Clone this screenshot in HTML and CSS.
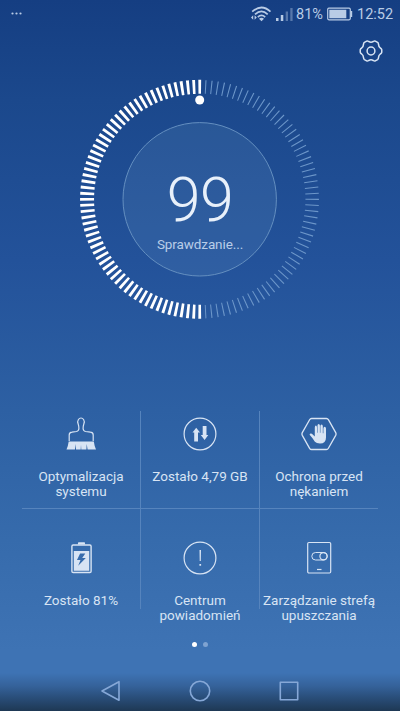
FILE: index.html
```html
<!DOCTYPE html>
<html lang="pl">
<head>
<meta charset="utf-8">
<title>Menedżer telefonu</title>
<link rel="stylesheet" href="styles.css">
</head>
<body>
<div class="screen">
  <header class="status">
    <svg class="dots" width="12" height="4" viewBox="0 0 12 4"><circle cx="2.500" cy="1.500" r="1.100"/><circle cx="6.500" cy="1.500" r="1.100"/><circle cx="10.500" cy="1.500" r="1.100"/></svg>
    <svg class="wifi" width="22" height="18" viewBox="0 0 22 18">
      <g fill="none" stroke="currentColor" stroke-width="1.700"><path d="M2.200 6.600Q11.500-1.600 20.500 6.600M5 9.300Q11.500 3.600 17.700 9.300M7.800 12.100Q11.500 8.800 15.200 12.100"/></g>
      <path d="M9 13.700Q11.500 11.800 14 13.700L11.500 16.300zM1 12.500L3.200 10.200V14.800zM6.800 12.500L4.600 10.200V14.800z"/>
    </svg>
    <svg class="signal" width="18" height="15" viewBox="0 0 18 15"><path d="M0 11h2.500v3H0zM4.800 8h2.500v6H4.800z"/><path opacity=".4" d="M9.700 4.500h2.300v9.500H9.700zM14.300 1h2.300v13h-2.300z"/></svg>
    <span class="percent">81%</span>
    <svg class="battery" width="26" height="14" viewBox="0 0 26 14"><rect x=".7" y="1.200" width="22.600" height="11.600" rx="1.200" fill="none" stroke="currentColor" stroke-width="1.200"/><path d="M2.300 2.800h17v8.400h-17zM23.500 4h1.700v6h-1.700z"/></svg>
    <span class="clock">12:52</span>
  </header>

  <div class="toolbar">
    <svg class="line" width="24" height="24" viewBox="-12 -12 24 24" stroke-width="1.500" stroke-linejoin="round">
      <path d="M10.700-1.500Q10.900 0 10.700 1.500Q10.500 2.300 9.300 3Q7.600 4.400 7.500 6.600Q7.500 8 6.600 8.600L4.300 9.900Q3.400 10.300 2.300 9.500Q0 8.200-2.300 9.500Q-3.400 10.300-4.300 9.900L-6.600 8.600Q-7.500 8-7.500 6.600Q-7.600 4.400-9.300 3Q-10.500 2.300-10.700 1.500Q-10.900 0-10.700-1.500Q-10.500-2.300-9.300-3Q-7.600-4.400-7.500-6.600Q-7.500-8-6.600-8.600L-4.300-9.900Q-3.400-10.300-2.300-9.500Q0-8.200 2.300-9.500Q3.400-10.300 4.300-9.900L6.600-8.600Q7.500-8 7.500-6.600Q7.600-4.400 9.300-3Q10.500-2.300 10.700-1.500Z"/>
      <circle r="3.900"/>
    </svg>
  </div>

  <main class="gauge">
    <svg class="ring" width="240" height="240" viewBox="-119.700 -120.300 240 240">
      <path class="ticks-on" pathLength="181.4" d="M1.370 112.490A112.500 112.500 0 1 1 1.370-112.490"/>
      <path class="ticks-off" pathLength="174.5" d="M5.400-112.370A112.500 112.500 0 0 1 5.400 112.370"/>
      <circle class="disc" r="76.700"/>
      <circle class="knob" cy="-99.300" r="4.500"/>
    </svg>
    <div class="reading">
      <div class="score">99</div>
      <div class="state">Sprawdzanie...</div>
    </div>
  </main>

  <section class="tiles">
    <div class="tile">
      <svg width="36" height="36" viewBox="0 0 36 36">
        <path fill="none" stroke="currentColor" stroke-width="1.200" d="M6.200 25V19Q6.200 16.500 9 16.200L13.500 15.500Q15.800 15 15.900 12.500Q16 10.500 15.300 8.500Q14 5.500 15.400 3.500Q16.500 2 18 2Q19.500 2 20.600 3.500Q22 5.500 20.700 8.500Q20 10.500 20.100 12.500Q20.200 15 22.500 15.500L27.500 16.200Q30.200 16.500 30.200 19V25"/>
        <path d="M5.700 25.500H30.800Q31.300 29.500 33 33.500H24.600L23.700 28L23.400 33.500H18.300L18 29L17.700 33.500H13L12.900 28L11.900 33.500H3.500Q5.200 29.500 5.700 25.500z"/>
      </svg>
      <p>Optymalizacja systemu</p>
    </div>
    <div class="tile">
      <svg width="36" height="36" viewBox="0 0 36 36"><circle cx="18" cy="18" r="15.900" fill="none" stroke="currentColor" stroke-width="1.200"/><path d="M14.200 11.800L18 16.500H16V25.500H12.200V16.500H10.500zM20.700 10H24.500V19H26.300L22.600 24L18.800 19H20.700z"/></svg>
      <p>Zostało 4,79 GB</p>
    </div>
    <div class="tile">
      <svg width="36" height="36" viewBox="0 0 36 36">
        <path fill="none" stroke="currentColor" stroke-width="1.300" d="M10.600 2.500H25.400Q26.700 2.500 27.400 3.700L34.700 16.600Q35.400 18 34.700 19.400L27.400 32.300Q26.700 33.500 25.400 33.500H10.600Q9.300 33.500 8.600 32.300L1.300 19.400Q.6 18 1.300 16.600L8.600 3.700Q9.300 2.500 10.600 2.500z"/>
        <path d="M9 17.700Q10.500 17 11.700 18.500L13.800 20.500V11.500Q13.900 9.500 14.900 9.500Q15.900 9.500 16 11.500V16.700H16.500V9.600Q16.600 8 17.700 8Q18.800 8 18.900 9.600V16.700H19.400V10Q19.500 8.500 20.600 8.500Q21.700 8.500 21.800 10V17.200H22.400V12.600Q22.500 10.800 23.600 10.800Q24.900 10.800 25 12.600V21.500Q25 27.600 19 27.600Q15.500 27.600 13.900 25.800Q12 22.500 9 19.300Q8.200 18.200 9 17.700z"/>
      </svg>
      <p>Ochrona przed nękaniem</p>
    </div>
    <div class="tile">
      <svg width="36" height="36" viewBox="0 0 36 36">
        <rect x="8.900" y="5" width="19.200" height="27.500" rx="1.300" fill="none" stroke="currentColor" stroke-width="1.400"/>
        <path d="M15.500 2.200H21.500Q22.100 2.200 22.100 4.500H14.900Q14.900 2.200 15.500 2.200z"/>
        <path fill-rule="evenodd" d="M10.800 11H26.200V30.700H10.800zM17.100 13.500L14 20H17.500L15.200 25.800L22.800 18H19.200L22.300 13.500z"/>
      </svg>
      <p>Zostało 81%</p>
    </div>
    <div class="tile">
      <svg width="36" height="36" viewBox="0 0 36 36"><circle cx="18" cy="18" r="15.900" fill="none" stroke="currentColor" stroke-width="1.200"/><path d="M17.500 10H19L18.800 21H17.700zM17.400 24H19.100V25.700H17.400z"/></svg>
      <p>Centrum powiadomień</p>
    </div>
    <div class="tile">
      <svg class="line" width="36" height="36" viewBox="0 0 36 36" stroke-width="1.200"><rect x="6.700" y="2.500" width="23" height="30.500" rx="1.200"/><rect x="10.800" y="12.500" width="15.500" height="7.500" rx="3.750" stroke-width="1"/><circle cx="22.500" cy="16.200" r="3.600"/><path d="M16 29.500H20.500"/></svg>
      <p>Zarządzanie strefą upuszczania</p>
    </div>
  </section>

  <div class="pager"><i class="current"></i><i></i></div>

  <nav class="navbar">
    <svg class="line" width="24" height="24" viewBox="0 0 24 24"><path d="M3 12L20 2.700V21.300z"/></svg>
    <svg class="line" width="24" height="24" viewBox="0 0 24 24"><circle cx="12" cy="12" r="9.700"/></svg>
    <svg class="line" width="24" height="24" viewBox="0 0 24 24"><rect x="3.300" y="3.300" width="17.400" height="17.400"/></svg>
  </nav>
</div>
</body>
</html>
```
FILE: styles.css
```css
* { box-sizing: border-box; }
body { margin: 0; }

.screen {
  width: 400px;
  height: 711px;
  display: flex;
  flex-direction: column;
  overflow: hidden;
  color: #d8e4f4;
  font-family: Roboto, "Liberation Sans", sans-serif;
  background: linear-gradient(#153e82 0, #1b488c 100px, #23529a 260px, #2d60a3 410px, #366bac 540px, #3e73b4 650px, #3e73b4 673px, #35629a 686px, #294d78 698px, #1e3854 711px);
}

svg { display: block; flex: none; fill: currentColor; }
.line { fill: none; stroke: currentColor; }

.status {
  height: 28px;
  display: flex;
  align-items: center;
  padding: 0 7px 0 10px;
  color: #b9cce6;
  font-size: 14.5px;
}
.dots { margin-right: auto; }
.wifi { margin-right: 4px; }
.signal { margin-right: 2px; }
.percent { width: 31px; }
.clock { width: 36px; margin-left: 4px; }

.toolbar {
  height: 51px;
  display: flex;
  justify-content: flex-end;
  padding: 11px 17px 0;
}

.gauge {
  height: 241px;
  display: grid;
  justify-content: center;
}
.ring, .reading { grid-area: 1 / 1; }
.ring { fill: none; }
.ticks-on { stroke: #fff; stroke-width: 14; stroke-dasharray: 1.4 1.6; }
.ticks-off { stroke: #6c96c9; stroke-width: 13.5; stroke-dasharray: .55 2.45; }
.disc { fill: rgba(120, 165, 205, .15); stroke: #648fc0; stroke-width: 1; }
.knob { fill: #fff; }
.reading { padding-top: 86px; text-align: center; }
.score { font-size: 61px; line-height: 70px; font-weight: 300; letter-spacing: -.5px; color: #e8f0fa; }
.state { font-size: 13.5px; line-height: 18px; letter-spacing: -.1px; color: #b9cde8; }

.tiles {
  width: 356px;
  height: 198px;
  margin: 91px auto 0 22px;
  display: grid;
  grid-template-columns: 119px 119px 118px;
  grid-template-rows: 98px 100px;
}
.tile {
  display: flex;
  flex-direction: column;
  align-items: center;
  padding-top: 5px;
  border-right: 1px solid #5684bd;
}
.tile:nth-child(3n) { border-right: 0; }
.tile:nth-child(-n+3) { border-bottom: 1px solid #5684bd; }
.tile:nth-child(n+4) { padding-top: 31px; }
.tile p {
  margin: 17px 0 0;
  width: 118px;
  text-align: center;
  font-size: 13.5px;
  line-height: 15px;
}

.pager {
  display: flex;
  justify-content: center;
  gap: 6px;
  padding-top: 33px;
}
.pager i { width: 5px; height: 5px; border-radius: 50%; background: #7fa3d1; }
.pager .current { background: #fff; }

.navbar {
  display: flex;
  justify-content: center;
  gap: 65px;
  margin-top: 32px;
  color: #86a8d7;
}
.navbar svg { stroke-width: 1.6; stroke-linejoin: round; }
```
